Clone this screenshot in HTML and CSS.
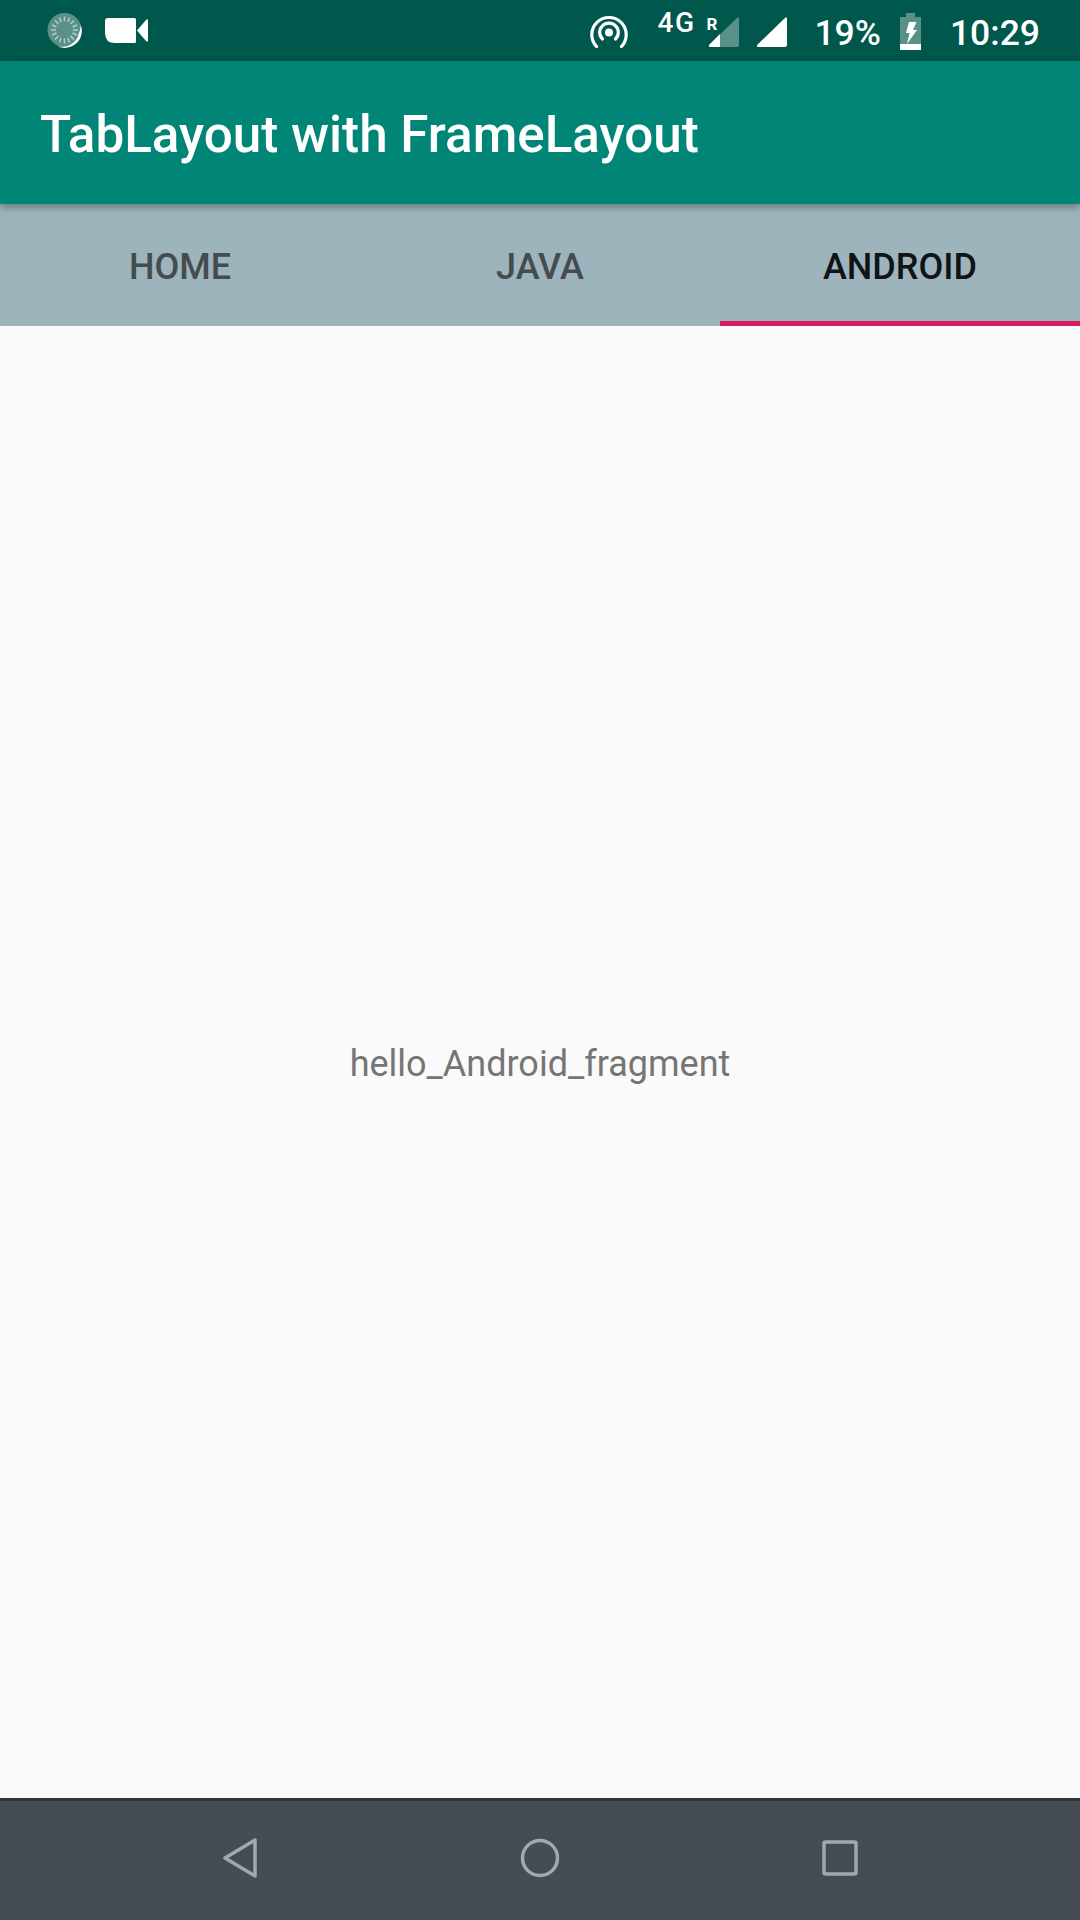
FILE: index.html
```html
<!DOCTYPE html>
<html lang="en">
<head>
  <meta charset="UTF-8" />
  <meta name="viewport" content="width=device-width, initial-scale=1" />
  <title>TabLayout with FrameLayout</title>
  <link rel="stylesheet" href="styles.css">
</head>
<body>
  <div class="phone">

    <div class="status-bar">
      <div class="status-left">
        <svg class="ic-sync" width="36" height="35" viewBox="0 0 36 35">
          <circle cx="17.5" cy="17" r="17" fill="#fff" opacity="0.35"/>
          <path d="M33.5 11.5A17 17 0 0 1 9 32.500A17 17 0 0 0 32 20A17 17 0 0 0 33.500 11.500Z" fill="#fff"/>
          <g stroke="#fff" stroke-width="1.500" opacity="0.55">
            <path d="M17.500 3.500v5M17.500 25.500v5M4 17h5M26 17h5M8 7.500l3.500 3.500M23.500 23l3.500 3.500M27 7.500L23.500 11M11.500 23L8 26.500"/>
            <path d="M12.500 4.500l1.500 4.500M21 25l1.500 4.500M22.500 4.500L21 9M14 25l-1.500 4.500M5 12l4.500 2M25.500 20l4.500 2M30 12l-4.500 2M9.500 20L5 22"/>
          </g>
        </svg>
        <svg class="ic-video" width="43" height="25" viewBox="0 0 43 25">
          <path d="M3 0H29.500Q31 0 31 1.500V23.500Q31 25 29.500 25H10Q0 25 0 15V3Q0 0 3 0Z" fill="#fff"/>
          <path d="M32 12.500L41 2Q43 0 43 3V22Q43 25 41 23Z" fill="#fff"/>
        </svg>
      </div>
      <div class="status-right">
        <svg class="ic-hotspot" width="38" height="34" viewBox="0 0 38 34">
          <g fill="none" stroke="#fff" stroke-width="3.200" stroke-linecap="round">
            <path d="M6.500 32.500A17.200 17.200 0 1 1 31.500 32.500"/>
            <path d="M12.500 25A9.300 9.300 0 1 1 25.500 25"/>
          </g>
          <circle cx="19" cy="18.500" r="4" fill="#fff"/>
        </svg>
        <span class="net-type">4G</span>
        <span class="roaming">R</span>
        <svg class="ic-signal" width="30" height="30" viewBox="0 0 30 30">
          <path d="M0 28L28 1Q30 -1 30 2V28Q30 30 28 30H2Q-1 30 0 28Z" fill="#fff" opacity="0.35"/>
          <path d="M0 28L11 17V30H2Q-1 30 0 28Z" fill="#fff"/>
        </svg>
        <svg class="ic-signal-full" width="30" height="30" viewBox="0 0 30 30">
          <path d="M0 28L28 1Q30 -1 30 2V28Q30 30 28 30H2Q-1 30 0 28Z" fill="#fff"/>
        </svg>
        <span class="battery-pct">19%</span>
        <svg class="ic-battery" width="21" height="37" viewBox="0 0 21 37">
          <path d="M6 0H15V4H21V37H0V4H6Z" fill="#fff" opacity="0.35"/>
          <rect x="0" y="31" width="21" height="6" fill="#fff"/>
          <path d="M9 9H16.500L13 17H17L7 31L9.500 20H6Z" fill="#fff"/>
        </svg>
        <span class="clock">10:29</span>
      </div>
    </div>

    <header class="app-bar">TabLayout with FrameLayout</header>

    <nav class="tabs">
      <div class="tab">HOME</div>
      <div class="tab">JAVA</div>
      <div class="tab active">ANDROID</div>
    </nav>

    <main class="content">
      <p class="fragment-text">hello_Android_fragment</p>
    </main>

    <div class="nav-bar">
      <svg width="34" height="40" viewBox="0 0 34 40">
        <path d="M32 2V38L2 20Z" fill="none" stroke="#a3a8ab" stroke-width="3.500" stroke-linejoin="round"/>
      </svg>
      <svg width="40" height="40" viewBox="0 0 40 40">
        <circle cx="20" cy="20" r="17.500" fill="none" stroke="#a3a8ab" stroke-width="3.500"/>
      </svg>
      <svg width="36" height="36" viewBox="0 0 36 36">
        <rect x="2" y="2" width="32" height="32" rx="1.500" fill="none" stroke="#a3a8ab" stroke-width="3.500"/>
      </svg>
    </div>

  </div>
</body>
</html>
```

FILE: styles.css
```css
* {
  box-sizing: border-box;
}
body {
  margin: 0;
  font-family: Roboto, 'Liberation Sans', sans-serif;
  background: #fafafa;
}
.phone {
  width: 1080px;
  height: 1920px;
  display: flex;
  flex-direction: column;
  overflow: hidden;
}
.status-bar {
  height: 61px;
  flex: none;
  background: #00574b;
  color: #fff;
  display: flex;
  justify-content: space-between;
  align-items: center;
  padding: 0 40px 0 47px;
}
.status-left {
  display: flex;
  align-items: center;
  gap: 22px;
}
.status-right {
  display: flex;
  align-items: center;
}
.ic-hotspot {
  margin-right: 30px;
}
.net-type {
  font-size: 28px;
  font-weight: 500;
  line-height: 20px;
  letter-spacing: 1.5px;
  margin-right: 11px;
  margin-top: -16px;
}
.roaming {
  font-size: 17px;
  font-weight: 700;
  line-height: 12px;
  margin-right: -8px;
  margin-top: -14px;
}
.ic-signal {
  margin-top: 3px;
  margin-right: 18px;
}
.ic-signal-full {
  margin-top: 3px;
  margin-right: 27px;
}
.battery-pct {
  font-size: 35.5px;
  font-weight: 500;
  line-height: 40px;
  margin-top: 4px;
  margin-right: 19px;
}
.ic-battery {
  margin-right: 29px;
  margin-top: 1px;
}
.clock {
  font-size: 35.5px;
  font-weight: 500;
  line-height: 40px;
  margin-top: 4px;
}
.app-bar {
  height: 143px;
  flex: none;
  background: #008577;
  color: #fff;
  font-size: 51.2px;
  font-weight: 500;
  display: flex;
  align-items: center;
  padding: 3px 0 0 40px;
  box-shadow: 0 3px 8px rgba(0,0,0,0.35);
  position: relative;
}
.tabs {
  height: 122px;
  flex: none;
  background: #9eb4bc;
  display: flex;
}
.tab {
  flex: 1;
  display: flex;
  align-items: center;
  justify-content: center;
  font-size: 36px;
  font-weight: 500;
  color: #454c50;
  padding-top: 9px;
  border-bottom: 5px solid transparent;
}
.tab.active {
  color: #111416;
  border-bottom-color: #d81b60;
}
.content {
  flex: 1;
  display: flex;
  align-items: center;
  justify-content: center;
  background: #fafafa;
}
.fragment-text {
  margin: 4px 0 0;
  font-size: 36px;
  color: #757575;
}
.nav-bar {
  height: 122px;
  flex: none;
  background: #454c53;
  border-top: 3px solid #2f3639;
  display: flex;
  justify-content: space-between;
  align-items: center;
  padding: 0 222px 5px 223px;
}
```
